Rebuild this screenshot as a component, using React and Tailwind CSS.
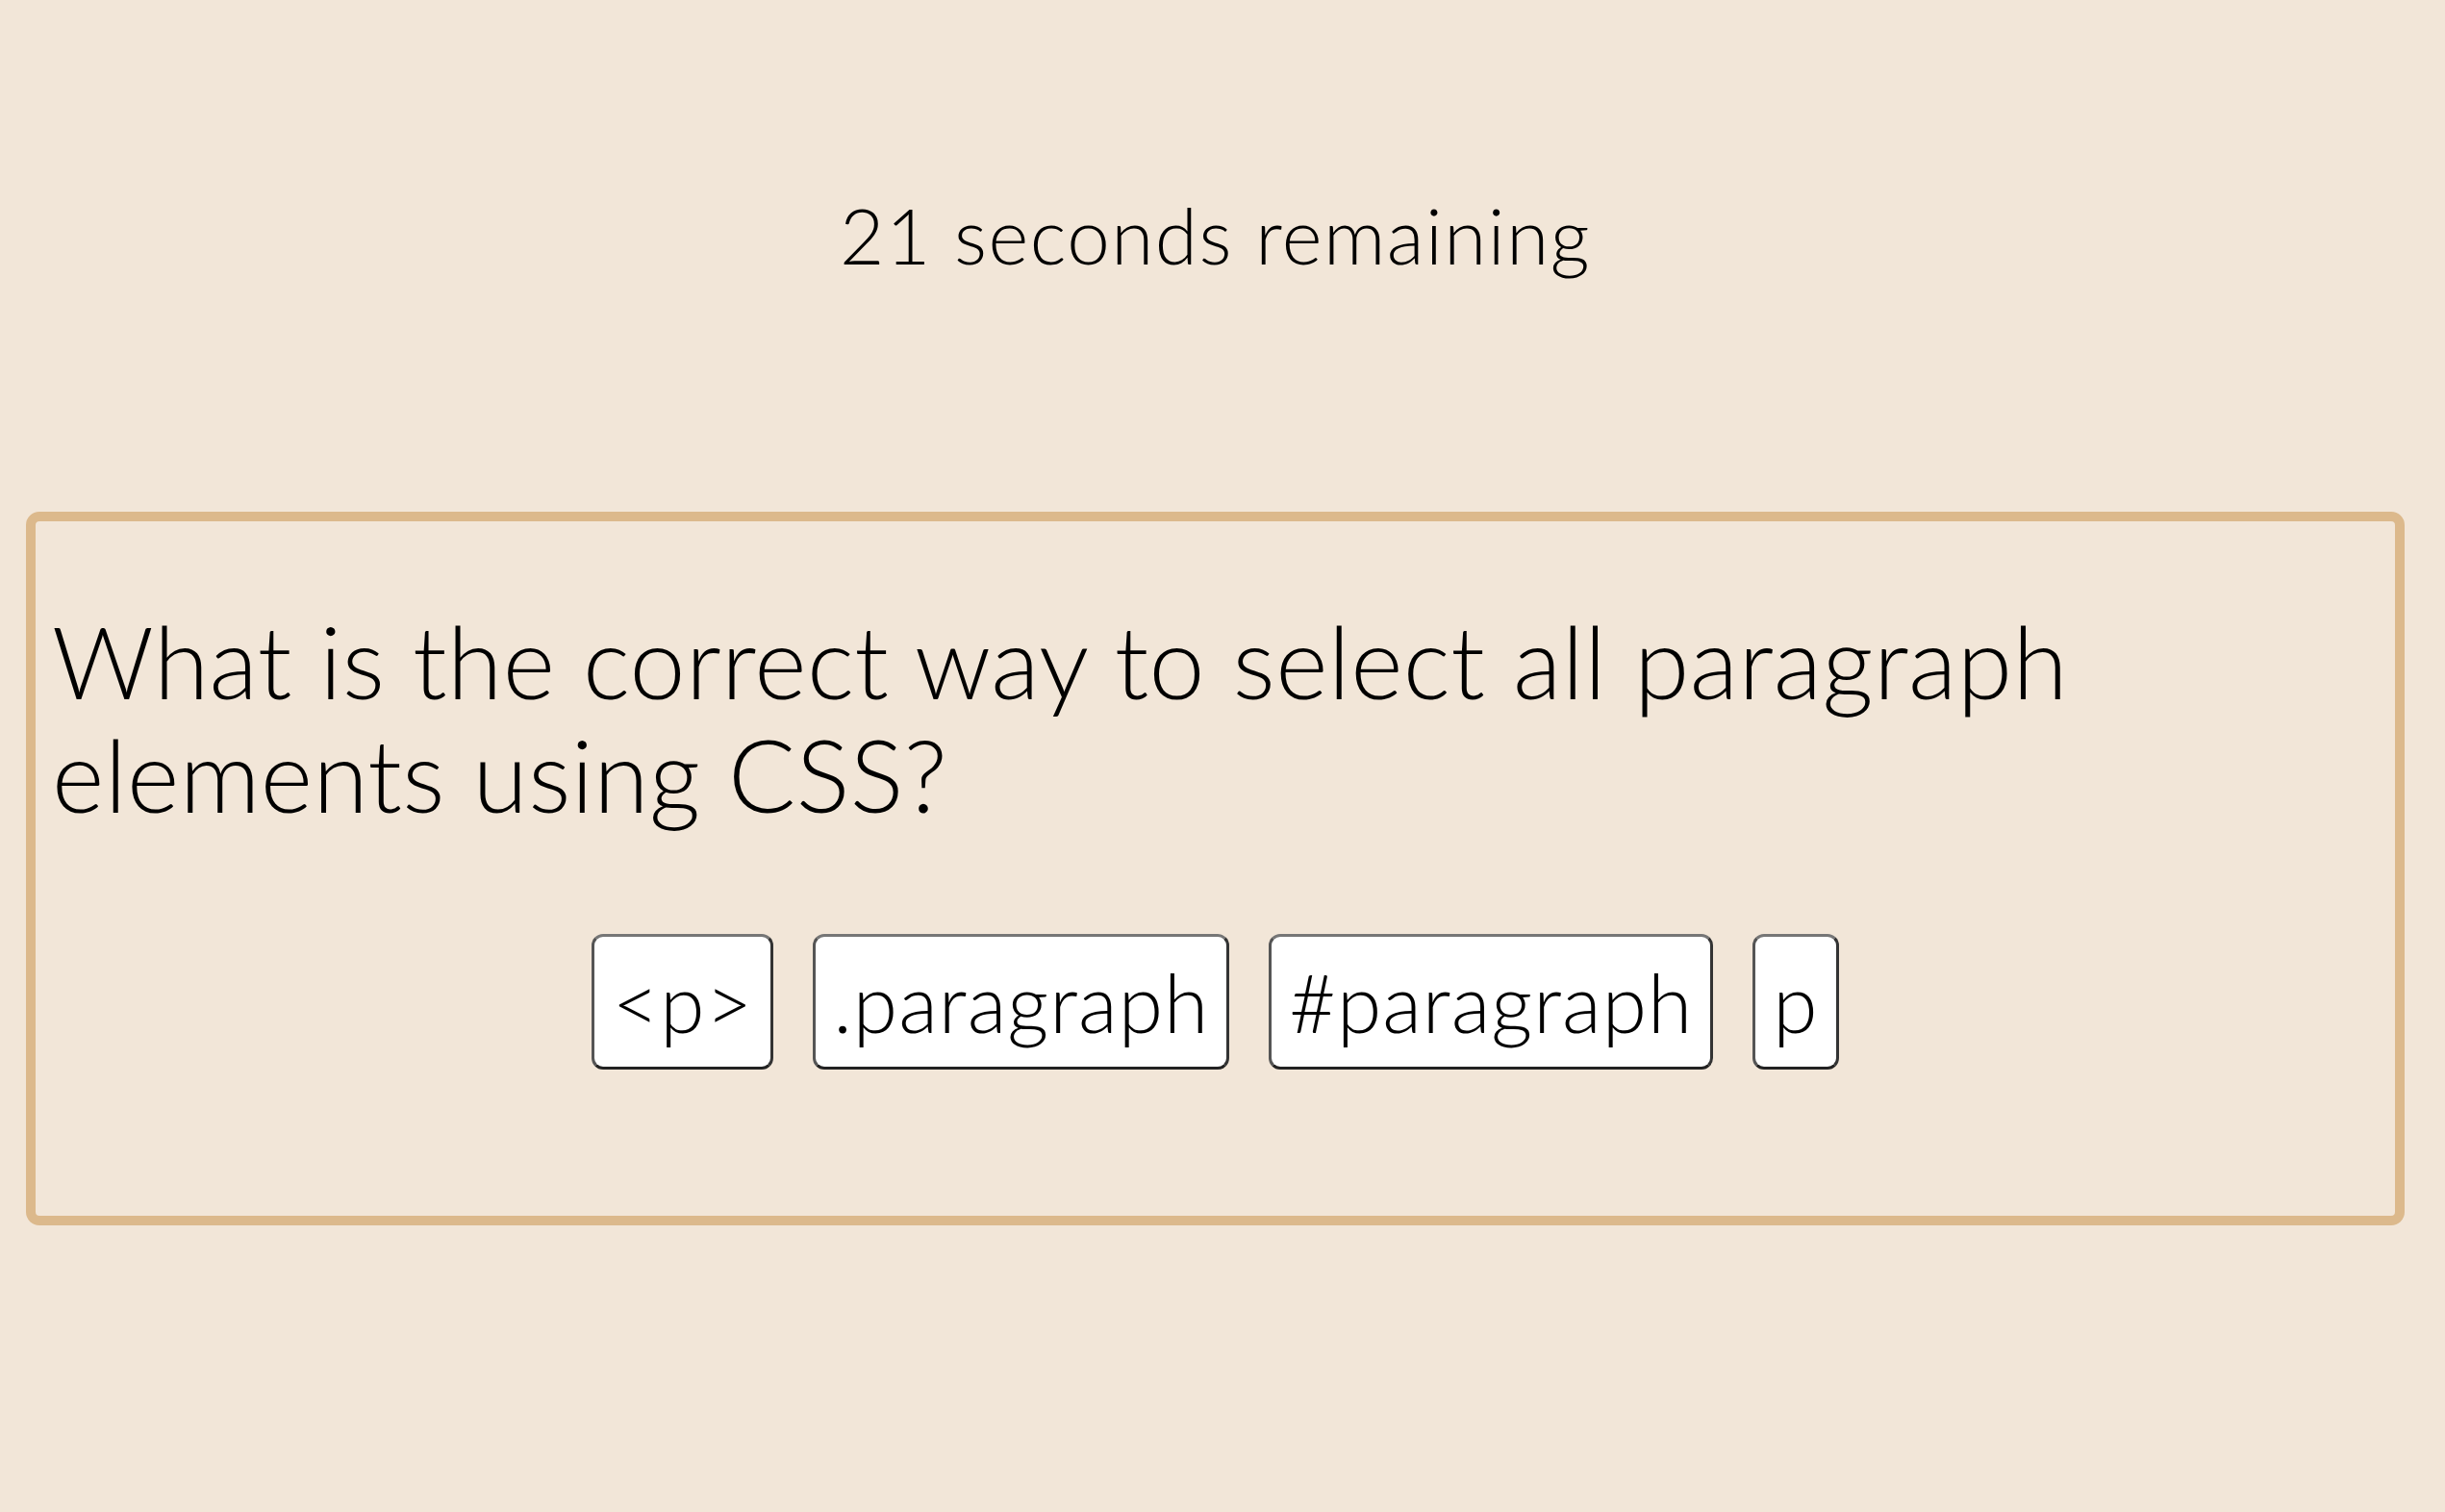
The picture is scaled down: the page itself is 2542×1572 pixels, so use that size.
import React from 'react';

const answers = ['<p>', '.paragraph', '#paragraph', 'p'];

export default function App() {
  return (
    <div className="min-h-[1572px] w-full bg-[#f2e6d8] text-black font-['Lato','Noto_Sans',sans-serif] font-light">
      <div className="pt-[196px] pl-[27px] w-[2500px] flex justify-center">
        <p className="text-[80px] leading-[96px] tracking-[1.5px]">21 seconds remaining</p>
      </div>

      <div className="mt-[240px] ml-[27px] w-[2473px] h-[742px] border-[10px] border-[#dcb98c] rounded-[14px] pl-[17px] pt-[86px]">
        <h2 className="text-[104px] leading-[118px] tracking-[0.4px] max-w-[2300px]">
          What is the correct way to select all paragraph elements using CSS?
        </h2>
        <div className="mt-[107px] flex justify-center gap-[41px] pr-[17px]">
          {answers.map((a) => (
            <button
              key={a}
              className="h-[141px] px-[18px] bg-white border-[3px] border-[#767676] border-b-[#222] border-r-[#333] border-l-[#555] rounded-[12px] text-[84px] tracking-[1px] leading-none font-light"
            >
              {a}
            </button>
          ))}
        </div>
      </div>
    </div>
  );
}
